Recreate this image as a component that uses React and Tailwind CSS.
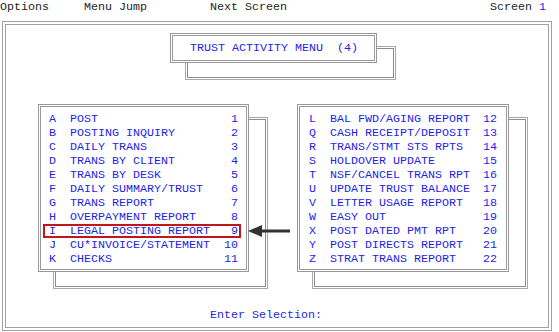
import React from "react";

const LEFT = [
  ["A", "POST", "1"],
  ["B", "POSTING INQUIRY", "2"],
  ["C", "DAILY TRANS", "3"],
  ["D", "TRANS BY CLIENT", "4"],
  ["E", "TRANS BY DESK", "5"],
  ["F", "DAILY SUMMARY/TRUST", "6"],
  ["G", "TRANS REPORT", "7"],
  ["H", "OVERPAYMENT REPORT", "8"],
  ["I", "LEGAL POSTING REPORT", "9"],
  ["J", "CU*INVOICE/STATEMENT", "10"],
  ["K", "CHECKS", "11"],
];

const RIGHT = [
  ["L", "BAL FWD/AGING REPORT", "12"],
  ["Q", "CASH RECEIPT/DEPOSIT", "13"],
  ["R", "TRANS/STMT STS RPTS", "14"],
  ["S", "HOLDOVER UPDATE", "15"],
  ["T", "NSF/CANCEL TRANS RPT", "16"],
  ["U", "UPDATE TRUST BALANCE", "17"],
  ["V", "LETTER USAGE REPORT", "18"],
  ["W", "EASY OUT", "19"],
  ["X", "POST DATED PMT RPT", "20"],
  ["Y", "POST DIRECTS REPORT", "21"],
  ["Z", "STRAT TRANS REPORT", "22"],
];

function Row({ k, label, num, highlight, pl, pr }) {
  return (
    <div
      className={
        "flex h-[14px] items-center leading-[14px] " +
        pl +
        " " +
        pr +
        (highlight ? " shadow-[inset_0_0_0_2px_#c0161c]" : "")
      }
    >
      <span className="w-[21px] shrink-0">{k}</span>
      <span className="flex-1 whitespace-pre">{label}</span>
      <span className="text-right">{num}</span>
    </div>
  );
}

export default function App() {
  return (
    <div
      className="w-[559px] h-[332px] bg-white overflow-hidden text-[11.67px] leading-[14px] text-[#1e1e1e]"
      style={{ fontFamily: '"Liberation Mono", "DejaVu Sans Mono", monospace' }}
    >
      {/* top bar */}
      <div className="flex h-[14px] items-center whitespace-pre">
        <span className="w-[84px]">Options</span>
        <span className="w-[126px]">Menu Jump</span>
        <span className="w-[280px]">Next Screen</span>
        <span>
          Screen <span className="text-[#2323e8]">1</span>
        </span>
      </div>

      {/* outer frame */}
      <div className="mt-[7px] ml-[2px] w-[550px] h-[310px] border-[4px] border-double border-[#a0a0a0] text-[#2323e8]">
        {/* title */}
        <div className="mt-[8px] ml-[164px] w-[207px] h-[30px] border-[3px] border-double border-[#999] bg-white flex items-center pl-[17px] whitespace-pre shadow-[17px_15px_0_-1px_white,17px_15px_0_0_#8c8c8c,17px_15px_0_1px_white,17px_15px_0_2px_#a8a8a8]">
          TRUST ACTIVITY MENU  (4)
        </div>

        {/* panels */}
        <div className="flex mt-[41px] ml-[32px]">
          <div className="w-[211px] h-[168px] border-[3px] border-double border-[#999] bg-white pt-[5px] pl-[2px] pr-[5px] shadow-[17px_15px_0_-1px_white,17px_15px_0_0_#8c8c8c,17px_15px_0_1px_white,17px_15px_0_2px_#a8a8a8]">
            {LEFT.map(([k, l, n]) => (
              <Row
                key={k}
                k={k}
                label={l}
                num={n}
                highlight={k === "I"}
                pl="pl-[6px]"
                pr="pr-[3px]"
              />
            ))}
          </div>

          <div className="w-[48px] shrink-0">
            <svg
              width="42"
              height="12"
              viewBox="0 0 42 12"
              className="mt-[121px] ml-[-1px] block"
            >
              <polygon points="0,6 14,0 14,12" fill="#333" />
              <rect x="13" y="4.5" width="29" height="3" fill="#333" />
            </svg>
          </div>

          <div className="w-[212px] h-[168px] border-[3px] border-double border-[#999] bg-white pt-[5px] pl-[2px] pr-[5px] shadow-[17px_15px_0_-1px_white,17px_15px_0_0_#8c8c8c,17px_15px_0_1px_white,17px_15px_0_2px_#a8a8a8]">
            {RIGHT.map(([k, l, n]) => (
              <Row
                key={k}
                k={k}
                label={l}
                num={n}
                pl="pl-[7px]"
                pr="pr-[4px]"
              />
            ))}
          </div>
        </div>

        {/* prompt */}
        <div className="mt-[36px] ml-[204px] h-[14px] leading-[14px]">
          Enter Selection:
        </div>
      </div>
    </div>
  );
}
